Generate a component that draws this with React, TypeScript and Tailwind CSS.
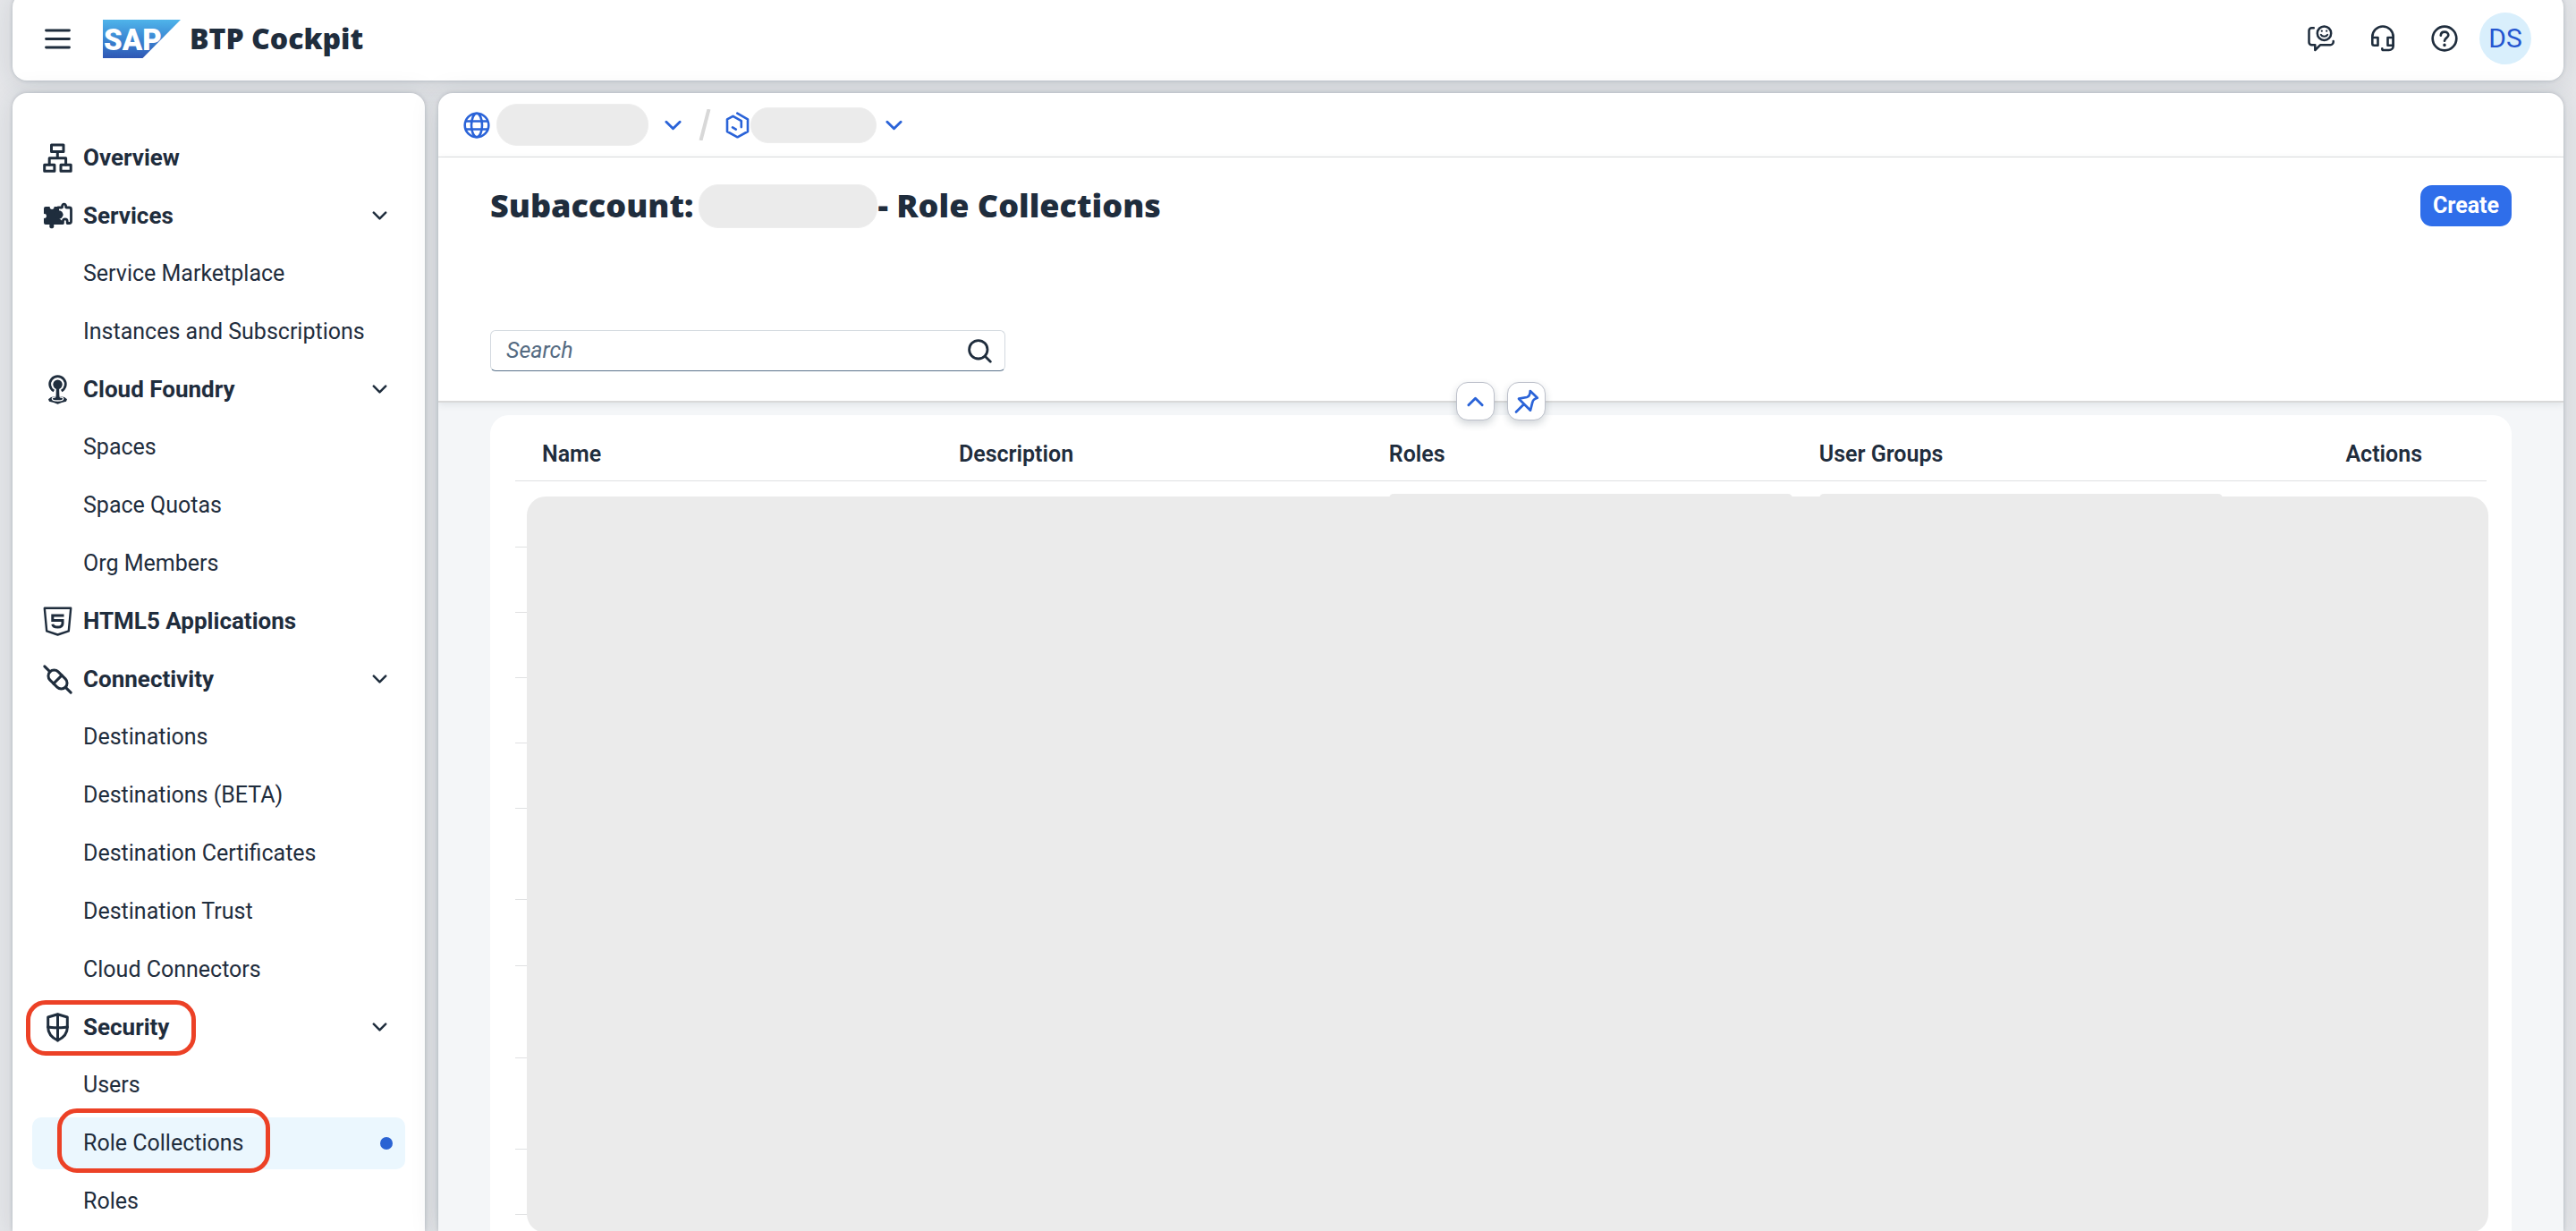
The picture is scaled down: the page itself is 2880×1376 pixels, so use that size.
import React from "react";

type IconName = "overview" | "services" | "foundry" | "html5" | "connectivity" | "security";

type NavGroup = {
  label: string;
  icon: IconName;
  marked?: boolean;
  children?: string[];
};

const NAV: NavGroup[] = [
  { label: "Overview", icon: "overview" },
  { label: "Services", icon: "services", children: ["Service Marketplace", "Instances and Subscriptions"] },
  { label: "Cloud Foundry", icon: "foundry", children: ["Spaces", "Space Quotas", "Org Members"] },
  { label: "HTML5 Applications", icon: "html5" },
  {
    label: "Connectivity",
    icon: "connectivity",
    children: [
      "Destinations",
      "Destinations (BETA)",
      "Destination Certificates",
      "Destination Trust",
      "Cloud Connectors",
    ],
  },
  { label: "Security", icon: "security", marked: true, children: ["Users", "Role Collections", "Roles"] },
];

const ACTIVE = "Role Collections";

const PANEL_SHADOW = "shadow-[0_0_4px_rgba(34,53,72,0.22),0_4px_32px_rgba(34,53,72,0.13)]";

function NavIcon({ name }: { name: IconName }) {
  const common = {
    width: 33,
    height: 33,
    viewBox: "0 0 33 33",
    fill: "none",
    stroke: "currentColor",
    strokeWidth: 3,
    strokeLinejoin: "round" as const,
    strokeLinecap: "round" as const,
    "aria-hidden": true,
    className: "shrink-0",
  };
  switch (name) {
    case "overview":
      return (
        <svg {...common}>
          <rect x="9.5" y="2" width="13.5" height="7.5" />
          <rect x="1.7" y="24.3" width="11.2" height="7" />
          <rect x="20" y="24.3" width="11.2" height="7" />
          <path d="M16.3 9.5v7M7.2 24v-7.3h18.4V24" />
        </svg>
      );
    case "services":
      return (
        <svg {...common}>
          <path
            d="M3 6h4.2c.6 0 .6.6.5 1.200a2.500 2.500 0 0 0 4.800 0c-.1-.6 0-1.200.6-1.200H18v6.500c1-.9 4.500-.8 4.500 2.500s-3.500 3.500-4.500 2.500V26h-5c-.8 0-1 .3-.8 1 .6 2-.6 3.300-2.400 3.300S6.800 29 7.400 27c.2-.7 0-1-.8-1H3a2 2 0 0 1-2-2v-4.500c0-.6.5-.8 1.200-.6a2.500 2.500 0 0 0 0-4.800C1.500 14.300 1 14 1 13.400V8a2 2 0 0 1 2-2z"
            fill="currentColor"
            stroke="none"
          />
          <path
            d="M17 7h3.600c.9 0 1.100-.4 1-1.200-.2-1.300.6-2.600 2-2.600s2.200 1.300 2 2.600c-.1.800.1 1.200 1 1.200h2.900a2 2 0 0 1 2 2v13.500a2 2 0 0 1-2 2h-2.300v-2.300a2.400 2.400 0 0 0-4.800 0v2.300H16"
            strokeWidth="2.800"
          />
          <circle cx="17.500" cy="15" r="4.800" fill="currentColor" stroke="none" />
          <path d="M14 19h4l3 2.500v4.500h-7z" fill="currentColor" stroke="none" />
        </svg>
      );
    case "foundry":
      return (
        <svg {...common}>
          <path d="M12.300 18.100a8.800 8.800 0 1 1 8.400 0" strokeWidth="2.800" strokeLinecap="butt" />
          <circle cx="16.500" cy="10.800" r="5.200" fill="currentColor" stroke="none" />
          <path
            d="M6 27.200 9 25l7.500-1.500L24 25l3 2.200-1 2.500-5 1.200-4.500 1.800L12 30.900l-5-1.200z"
            fill="currentColor"
            stroke="none"
          />
          <ellipse cx="16.500" cy="26.800" rx="6.200" ry="2.200" stroke="#fff" strokeWidth="1.300" fill="currentColor" />
          <path d="M14.900 14h3.200l.3 10c0 1.700 1.700 2.500 1.700 2.500h-7.200s1.700-.8 1.700-2.500z" fill="currentColor" stroke="none" />
        </svg>
      );
    case "html5":
      return (
        <svg {...common} strokeWidth="2.400">
          <path d="M1.800 1.800h29.400l-2.400 25.500-12.300 4.200-12.300-4.200z" />
          <path d="M23.500 10H10.800v5.500H22v3.200c0 3-2.300 4.300-5.500 4.300s-5.300-1.100-5.700-3.300" strokeWidth="3" strokeLinecap="butt" strokeLinejoin="miter" />
        </svg>
      );
    case "connectivity":
      return (
        <svg {...common}>
          <g transform="rotate(45 16.500 16.500)">
            <rect x="4.300" y="10" width="24.400" height="13" rx="6.500" />
            <path d="M16.500 10v13M4.300 16.500h-8.500M28.700 16.500h8.500" />
          </g>
        </svg>
      );
    case "security":
      return (
        <svg {...common}>
          <path d="M16.500 1.800 27.300 5v11.500c0 6.500-4.600 11.500-10.800 14.500C10.300 28 5.700 23 5.700 16.500V5z" />
          <path d="M16.500 2v29M5.700 16c3.500 1 18.100 1 21.600 0" />
        </svg>
      );
  }
}

function Chevron({ up = false, small = false }: { up?: boolean; small?: boolean }) {
  return (
    <svg
      width={small ? 17 : 19}
      height={small ? 10 : 12}
      viewBox="0 0 20 12"
      fill="none"
      stroke="currentColor"
      strokeWidth="3"
      strokeLinecap="round"
      strokeLinejoin="round"
      aria-hidden
      className="shrink-0"
    >
      <path d={up ? "M2 10 10 2l8 8" : "M2 2l8 8 8-8"} />
    </svg>
  );
}

function SapLogo() {
  return (
    <svg width="87" height="43" viewBox="0 0 87 43" role="img" aria-label="SAP">
      <defs>
        <linearGradient id="sap" x1="0" y1="0" x2="0" y2="1">
          <stop offset="0" stopColor="#4fb4ea" />
          <stop offset="0.5" stopColor="#3b87d3" />
          <stop offset="1" stopColor="#2f57b4" />
        </linearGradient>
      </defs>
      <path d="M0 0h87L44.500 43H0z" fill="url(#sap)" />
      <text x="1" y="34" fontFamily="Roboto, sans-serif" fontWeight="900" fontSize="33" fill="#fff">
        SAP
      </text>
    </svg>
  );
}

function TopBar() {
  const line = {
    fill: "none",
    stroke: "currentColor",
    strokeWidth: 2.8,
    strokeLinecap: "round" as const,
    strokeLinejoin: "round" as const,
    "aria-hidden": true,
  };
  return (
    <header className={`-mt-2 flex h-[98px] shrink-0 items-center rounded-2xl bg-white pt-1 pr-9 pl-9 ${PANEL_SHADOW}`}>
      <button type="button" aria-label="Menu">
        <svg width="29" height="23" viewBox="0 0 29 23" {...line}>
          <path d="M1.500 2h26M1.500 11.500h26M1.500 21h26" />
        </svg>
      </button>
      <a href="#home" className="ml-9 flex items-center gap-2.5">
        <SapLogo />
        <span className="font-['Noto_Sans',sans-serif] text-[32px] leading-10 font-black">BTP Cockpit</span>
      </a>
      <div className="ml-auto flex items-center">
        <button type="button" aria-label="Feedback" className="mr-10">
          <svg width="30" height="30" viewBox="0 0 30 30" {...line} strokeWidth="2.500">
            <circle cx="18.500" cy="9.200" r="7.700" />
            <path d="M14.800 10.800c1.300 2.600 6.100 2.600 7.400 0" strokeWidth="2" />
            <path d="M15.800 6.600v.1M21.200 6.600v.1" strokeWidth="2.200" />
            <path d="M6.800 3.300H4.500a3 3 0 0 0-3 3v13a3 3 0 0 0 3 3h3.800V28l5.700-5.700h11a3.700 3.700 0 0 0 3.700-4.300" />
          </svg>
        </button>
        <button type="button" aria-label="Support" className="mr-10">
          <svg width="28" height="30" viewBox="0 0 28 30" {...line} strokeWidth="2.600">
            <path d="M2.300 14v-.8a11.700 11.700 0 0 1 23.400 0V14" />
            <path d="M2.300 14H8.500v8.700H4.300a2 2 0 0 1-2-2zM25.700 14h-6.200v8.700h6.200z" />
            <path d="M25.700 14v9.200a4.800 4.800 0 0 1-4.800 4.800h-6.100c-1 0-1.500-.6-1.500-1.600" />
          </svg>
        </button>
        <button type="button" aria-label="Help" className="mr-6">
          <svg width="30" height="30" viewBox="0 0 30 30" {...line} strokeWidth="2.700">
            <circle cx="15" cy="15" r="13.300" />
            <path d="M10.800 11.600c.1-2.500 1.900-4 4.300-4 2.500 0 4.200 1.600 4.200 3.700 0 3-4.300 3.200-4.300 6.400" />
            <path d="M15 22.300v.2" strokeWidth="3.400" />
          </svg>
        </button>
        <button
          type="button"
          aria-label="Profile DS"
          className="flex size-[58px] items-center justify-center rounded-full bg-[#d9effc] text-[30px] leading-none text-[#2456d0]"
        >
          DS
        </button>
      </div>
    </header>
  );
}

function SideNav() {
  return (
    <nav
      aria-label="Subaccount"
      className={`w-[461px] shrink-0 rounded-t-2xl bg-white pt-[43px] pr-[22px] pl-[22px] text-[25px] leading-8 ${PANEL_SHADOW}`}
    >
      <ul>
        {NAV.map((group) => (
          <li key={group.label} className={group.children ? "mb-1.5" : "mb-[7px]"}>
            <div className="relative flex h-[58px] items-center pr-5 pl-3">
              {group.marked && (
                <span className="pointer-events-none absolute -top-px -left-[7px] h-[62px] w-[190px] rounded-[22px] border-[5px] border-[#ec4126]" />
              )}
              <a href={`#${group.icon}`} className="flex items-center gap-3 text-[26px] font-bold">
                <NavIcon name={group.icon} />
                {group.label}
              </a>
              {group.children && (
                <button type="button" aria-label={`Collapse ${group.label}`} className="ml-auto">
                  <Chevron small />
                </button>
              )}
            </div>
            {group.children && (
              <ul className="mt-[7px] flex flex-col gap-[7px]">
                {group.children.map((child) => {
                  const active = child === ACTIVE;
                  return (
                    <li key={child} className="relative">
                      <a
                        href={`#${child}`}
                        aria-current={active ? "page" : undefined}
                        className={`flex h-[58px] items-center rounded-[10px] pr-3.5 pl-[57px] whitespace-nowrap ${
                          active ? "bg-[#ebf7fe]" : ""
                        }`}
                      >
                        {child}
                        {active && <span className="ml-auto size-3.5 rounded-full bg-[#2a63d3]" />}
                      </a>
                      {active && (
                        <span className="pointer-events-none absolute -top-2.5 left-7 h-[72px] w-[238px] rounded-[22px] border-[5px] border-[#ec4126]" />
                      )}
                    </li>
                  );
                })}
              </ul>
            )}
          </li>
        ))}
      </ul>
    </nav>
  );
}

function Breadcrumb() {
  return (
    <nav aria-label="Breadcrumb" className="flex h-[72px] items-center border-b border-[#e0e1e2] pl-7 text-[#2a63d8]">
      <svg width="30" height="30" viewBox="0 0 30 30" fill="none" stroke="currentColor" strokeWidth="2.600" aria-hidden>
        <circle cx="15" cy="15" r="13.300" />
        <ellipse cx="15" cy="15" rx="6" ry="13.300" />
        <path d="M2.500 10.500h25M2.500 19.500h25" />
      </svg>
      <span className="ml-[7px] h-[47px] w-[170px] rounded-[23px] border border-[#eeeeee] bg-[#ebebeb]" />
      <button type="button" aria-label="Switch global account" className="ml-[18px]">
        <Chevron />
      </button>
      <svg width="14" height="35" viewBox="0 0 14 35" stroke="#d8d8d8" strokeWidth="4" aria-hidden className="ml-[19px]">
        <path d="M11.500 0 2.500 35" />
      </svg>
      <svg
        width="27"
        height="30"
        viewBox="0 0 27 30"
        fill="none"
        stroke="currentColor"
        strokeWidth="2.600"
        strokeLinecap="round"
        strokeLinejoin="round"
        aria-hidden
        className="ml-4"
      >
        <path d="M13.300 1.700 25 8.300V22l-11.500 6.300L2 22V8.300l6.500-3.500 9.300 5.300v7M8 17.300l3.800 2.300" />
      </svg>
      <span className="ml-px h-10 w-[141px] rounded-[20px] border border-[#eeeeee] bg-[#ebebeb]" />
      <button type="button" aria-label="Switch subaccount" className="ml-2.5">
        <Chevron />
      </button>
    </nav>
  );
}

function PageHeader() {
  const round =
    "flex size-[43px] items-center justify-center rounded-[13px] border border-[#bcc0ca] bg-white text-[#2a63d8] shadow-[0_4px_8px_rgba(34,53,72,0.2)]";
  return (
    <section className="relative z-10 border-b-2 border-[#d9d9d9] bg-white px-[58px] pt-[31px] pb-[33px] shadow-[0_2px_8px_rgba(34,53,72,0.1)]">
      <div className="flex h-[46px] items-center">
        <h1 className="flex items-center font-['Noto_Sans',sans-serif] text-[36px] leading-[46px] font-black">
          Subaccount:
          <span className="ml-1.5 h-[49px] w-[200px] rounded-[22px] border border-[#eeeeee] bg-[#ebebeb]" />
          - Role Collections
        </h1>
        <button
          type="button"
          className="ml-auto h-[46px] rounded-[13px] bg-[#2f6eea] px-3.5 text-[25px] leading-8 font-bold text-white"
        >
          Create
        </button>
      </div>
      <label className="mt-[116px] flex h-[46px] w-[576px] items-center rounded-md border border-[#d3d9df] border-b-[#5b738b] pr-3.5 pl-[17px]">
        <input
          type="search"
          aria-label="Search"
          placeholder="Search"
          className="min-w-0 flex-1 text-[25px] leading-8 outline-none placeholder:text-[#556b82] placeholder:italic"
        />
        <svg width="27" height="27" viewBox="0 0 27 27" fill="none" stroke="currentColor" strokeWidth="2.800" strokeLinecap="round" aria-hidden>
          <circle cx="11.800" cy="11.800" r="10.200" />
          <path d="m19.300 19.300 6 6" />
        </svg>
      </label>
      <div className="absolute inset-x-0 -bottom-[22px] flex justify-center gap-3.5">
        <button type="button" aria-label="Collapse header" className={round}>
          <Chevron up />
        </button>
        <button type="button" aria-label="Pin header" className={round}>
          <svg
            width="28"
            height="28"
            viewBox="7.500 6.500 28 28"
            fill="none"
            stroke="currentColor"
            strokeWidth="2.700"
            strokeLinecap="round"
            strokeLinejoin="round"
            aria-hidden
          >
            <path d="M25.300 8.500 33.300 16.200c-3 .8-5 2.500-5.500 5l-2.300 9L12.500 17.200l9-1.700c2.400-.6 3.700-3.500 3.800-7zM18.300 23.300 9.500 32" />
          </svg>
        </button>
      </div>
    </section>
  );
}

const ROWS = [
  "h-[74px]",
  "h-[73px]",
  "h-[73px]",
  "h-[73px]",
  "h-[73px]",
  "h-[102px]",
  "h-[74px]",
  "h-[103px]",
  "h-[102px]",
  "h-[73px]",
  "h-[73px]",
];

function RoleTable() {
  return (
    <div className="rounded-t-[21px] bg-white px-7 pt-[13px]">
      <div className="relative">
        <table className="w-full table-fixed border-collapse text-left text-[25px] leading-8">
          <thead>
            <tr className="h-[60px] border-b border-[#e0e1e2]">
              <th className="w-[21.140%] pt-0.5 pl-[30px] font-semibold">Name</th>
              <th className="w-[21.820%] pt-0.5 pl-[30px] font-semibold">Description</th>
              <th className="w-[21.820%] pt-0.5 pl-[30px] font-semibold">Roles</th>
              <th className="w-[21.820%] pt-0.5 pl-[30px] font-semibold">User Groups</th>
              <th className="pt-0.5 pr-[72px] text-right font-semibold">Actions</th>
            </tr>
          </thead>
          <tbody>
            {ROWS.map((height, i) => (
              <tr key={i} className={`${height} border-b border-[#e0e1e2]`}>
                <td />
                <td />
                {[0, 1].map((c) => (
                  <td key={c} className="pt-3.5 pl-[30px] align-top">
                    {i === 0 && <span className="block h-8 rounded-[5px] bg-[#ebebeb]" />}
                  </td>
                ))}
                <td />
              </tr>
            ))}
          </tbody>
        </table>
        <div className="absolute top-[78px] -right-0.5 left-[13px] h-[823px] rounded-[21px] bg-[#ebebeb]" />
      </div>
    </div>
  );
}

export default function App() {
  return (
    <div className="flex h-screen flex-col gap-3.5 overflow-hidden bg-[#e6e7ea] px-3.5 font-[Roboto,'Noto_Sans',sans-serif] text-[#1f2d3d]">
      <TopBar />
      <div className="flex min-h-0 flex-1 gap-[15px]">
        <SideNav />
        <main className={`min-w-0 flex-1 overflow-hidden rounded-t-2xl bg-white ${PANEL_SHADOW}`}>
          <Breadcrumb />
          <PageHeader />
          <div className="bg-[#f4f6f8] px-[58px] pt-3.5">
            <RoleTable />
          </div>
        </main>
      </div>
    </div>
  );
}
